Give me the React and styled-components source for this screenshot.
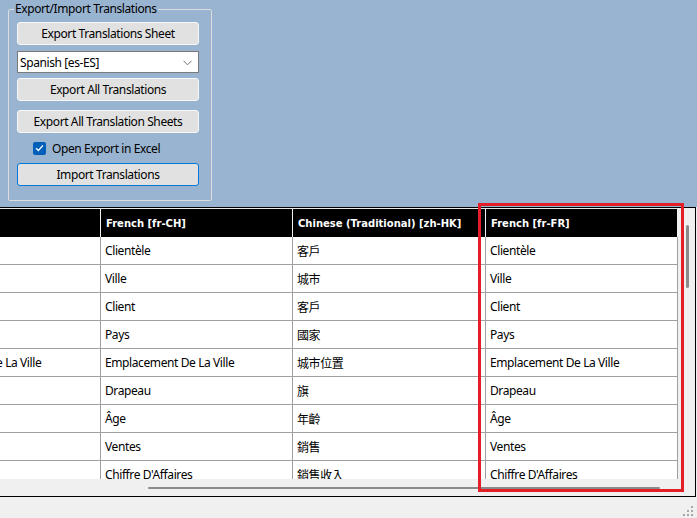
import React, { useLayoutEffect, useRef } from 'react';
import styled, { createGlobalStyle } from 'styled-components';

const GlobalStyle = createGlobalStyle`
  html, body {
    margin: 0;
    padding: 0;
    background: #f0f0f0;
  }
  body {
    font-family: 'Noto Sans', 'Noto Sans CJK TC', sans-serif;
    font-size: 12px;
    letter-spacing: -0.4px;
    color: #000;
  }
`;

const columns = [
  { title: 'French [fr-BE]', width: 193 },
  { title: 'French [fr-CH]', width: 192 },
  { title: 'Chinese (Traditional) [zh-HK]', width: 193 },
  { title: 'French [fr-FR]', width: 192 },
];

const french = [
  'Clientèle',
  'Ville',
  'Client',
  'Pays',
  'Emplacement De La Ville',
  'Drapeau',
  'Âge',
  'Ventes',
  "Chiffre D'Affaires",
];

const chinese = ['客戶', '城市', '客戶', '國家', '城市位置', '旗', '年齡', '銷售', '銷售收入'];

const rows = french.map((fr, i) => [fr, fr, chinese[i], fr]);

const gridTemplate = columns.map((c) => `${c.width}px`).join(' ');

const App = () => {
  const viewportRef = useRef(null);

  // grid is scrolled all the way to the right
  useLayoutEffect(() => {
    const el = viewportRef.current;
    if (el) el.scrollLeft = el.scrollWidth - el.clientWidth;
  }, []);

  return (
    <>
      <GlobalStyle />
      <Window>
        <TopPanel>
          <GroupBox>
            <Legend>Export/Import Translations</Legend>
            <Controls>
              <Button $mt={5}>Export Translations Sheet</Button>
              <Combo $mt={6}>
                <span>Spanish [es-ES]</span>
                <svg width='9' height='6' viewBox='0 0 9 6'>
                  <path d='M0.5 0.8 L4.5 4.8 L8.5 0.8' fill='none' stroke='#6e6e6e' strokeWidth='1' />
                </svg>
              </Combo>
              <Button $mt={5}>Export All Translations</Button>
              <Button $mt={9}>Export All Translation Sheets</Button>
              <CheckRow $mt={5}>
                <CheckBox>
                  <svg width='9' height='8' viewBox='0 0 9 8'>
                    <path d='M1 4.2 L3.4 6.5 L8 1.4' fill='none' stroke='#fff' strokeWidth='1.3' />
                  </svg>
                </CheckBox>
                Open Export in Excel
              </CheckRow>
              <Button $mt={5} $default>
                Import Translations
              </Button>
            </Controls>
          </GroupBox>
        </TopPanel>

        <GridBox>
          <Viewport ref={viewportRef}>
            <Table>
              <Row $header>
                {columns.map((c) => (
                  <Cell key={c.title} $header>
                    {c.title}
                  </Cell>
                ))}
              </Row>
              {rows.map((r, i) => (
                <Row key={i}>
                  {r.map((text, j) => (
                    <Cell key={j}>{text}</Cell>
                  ))}
                </Row>
              ))}
            </Table>
          </Viewport>
          <VScroll>
            <VThumb />
          </VScroll>
          <HScroll>
            <HThumb />
          </HScroll>
          <Corner />
        </GridBox>

        <StatusBar>
          <svg width='12' height='12' viewBox='0 0 12 12'>
            {[
              [9, 1],
              [5, 5],
              [9, 5],
              [1, 9],
              [5, 9],
              [9, 9],
            ].map(([x, y]) => (
              <rect key={`${x}-${y}`} x={x} y={y} width='2' height='2' fill='#a7a7a7' />
            ))}
          </svg>
        </StatusBar>

        <Highlight />
      </Window>
    </>
  );
};

export default App;

// Window

const Window = styled.div`
  position: relative;
  width: 697px;
  height: 518px;
  display: flex;
  flex-direction: column;
  overflow: hidden;
  background: #f0f0f0;
`;

// Top panel with the group box

const TopPanel = styled.div`
  height: 207px;
  flex: 0 0 auto;
  background: #99b4d1;
  padding-top: 1px;
  box-sizing: border-box;
`;

const GroupBox = styled.fieldset`
  box-sizing: border-box;
  width: 204px;
  height: 200px;
  margin: 0 0 0 8px;
  padding: 0 12px 0 8px;
  min-width: 0;
  border: 1px solid #dcdcdc;
  border-radius: 2px;
`;

const Legend = styled.legend`
  font-size: 12px;
  line-height: 16px;
  padding: 0 1px;
  margin-left: -3px;
  color: #000;
`;

const Controls = styled.div`
  display: flex;
  flex-direction: column;
`;

const Button = styled.button`
  box-sizing: border-box;
  height: 23px;
  width: 100%;
  margin: ${(p) => p.$mt || 0}px 0 0;
  padding: 0;
  font-family: inherit;
  font-size: 12px;
  letter-spacing: inherit;
  color: #000;
  background: #e1e1e1;
  border: 1px solid ${(p) => (p.$default ? '#0078d7' : '#f7f7f7')};
  border-radius: 3px;
  text-align: center;
  cursor: pointer;
  &:hover {
    background: #e5f1fb;
  }
`;

const Combo = styled.div`
  box-sizing: border-box;
  height: 22px;
  margin-top: ${(p) => p.$mt || 0}px;
  display: flex;
  align-items: center;
  justify-content: space-between;
  padding: 0 6px 0 2px;
  background: #fff;
  border: 1px solid #7a7a7a;
  svg {
    margin-top: 1px;
  }
`;

const CheckRow = styled.label`
  height: 20px;
  margin-top: ${(p) => p.$mt || 0}px;
  display: flex;
  align-items: center;
  gap: 6px;
  padding-left: 16px;
`;

const CheckBox = styled.span`
  width: 13px;
  height: 13px;
  box-sizing: border-box;
  border-radius: 2px;
  background: #005fb8;
  display: flex;
  align-items: center;
  justify-content: center;
`;

// Data grid

const GridBox = styled.div`
  flex: 0 0 auto;
  box-sizing: border-box;
  width: 696px;
  height: 290px;
  border-top: 1px solid #000;
  border-right: 1px solid #000;
  border-bottom: 1px solid #000;
  background: #f0f0f0;
  display: grid;
  grid-template-columns: 1fr 17px;
  grid-template-rows: 1fr 17px;
`;

const Viewport = styled.div`
  overflow: hidden;
  background: #f0f0f0;
`;

const Table = styled.div`
  width: max-content;
`;

const Row = styled.div`
  display: grid;
  grid-template-columns: ${gridTemplate};
  height: 28px;
  background: ${(p) => (p.$header ? '#000' : '#fff')};
  border-top: ${(p) => (p.$header ? '1px solid #e8e8e8' : 'none')};
`;

const Cell = styled.div`
  box-sizing: border-box;
  display: flex;
  align-items: center;
  overflow: hidden;
  white-space: nowrap;
  padding-left: ${(p) => (p.$header ? 5 : 4)}px;
  border-right: 1px solid ${(p) => (p.$header ? '#f2f2f2' : '#a0a0a0')};
  border-bottom: ${(p) => (p.$header ? 'none' : '1px solid #a0a0a0')};
  color: ${(p) => (p.$header ? '#fff' : '#000')};
  font-family: ${(p) =>
    p.$header ? "'DejaVu Sans', sans-serif" : "'Noto Sans', 'Noto Sans CJK TC', sans-serif"};
  font-size: ${(p) => (p.$header ? 10 : 12)}px;
  font-weight: ${(p) => (p.$header ? 700 : 400)};
  letter-spacing: ${(p) => (p.$header ? 0 : -0.4)}px;
`;

const VScroll = styled.div`
  position: relative;
  background: #f0f0f0;
`;

const VThumb = styled.div`
  position: absolute;
  left: 8px;
  top: 17px;
  width: 3px;
  height: 63px;
  border-radius: 2px;
  background: #8a8a8a;
`;

const HScroll = styled.div`
  position: relative;
  background: #f0f0f0;
`;

const HThumb = styled.div`
  position: absolute;
  left: 148px;
  top: 8px;
  width: 512px;
  height: 2px;
  border-radius: 1px;
  background: #8a8a8a;
`;

const Corner = styled.div`
  background: #f0f0f0;
`;

const StatusBar = styled.div`
  flex: 1;
  display: flex;
  justify-content: flex-end;
  align-items: flex-end;
  padding: 0 3px 1px 0;
  background: #f0f0f0;
`;

// Red annotation box drawn over the grid

const Highlight = styled.div`
  position: absolute;
  left: 478px;
  top: 203px;
  width: 206px;
  height: 289px;
  box-sizing: border-box;
  border: 3px solid #e41e26;
  pointer-events: none;
`;
